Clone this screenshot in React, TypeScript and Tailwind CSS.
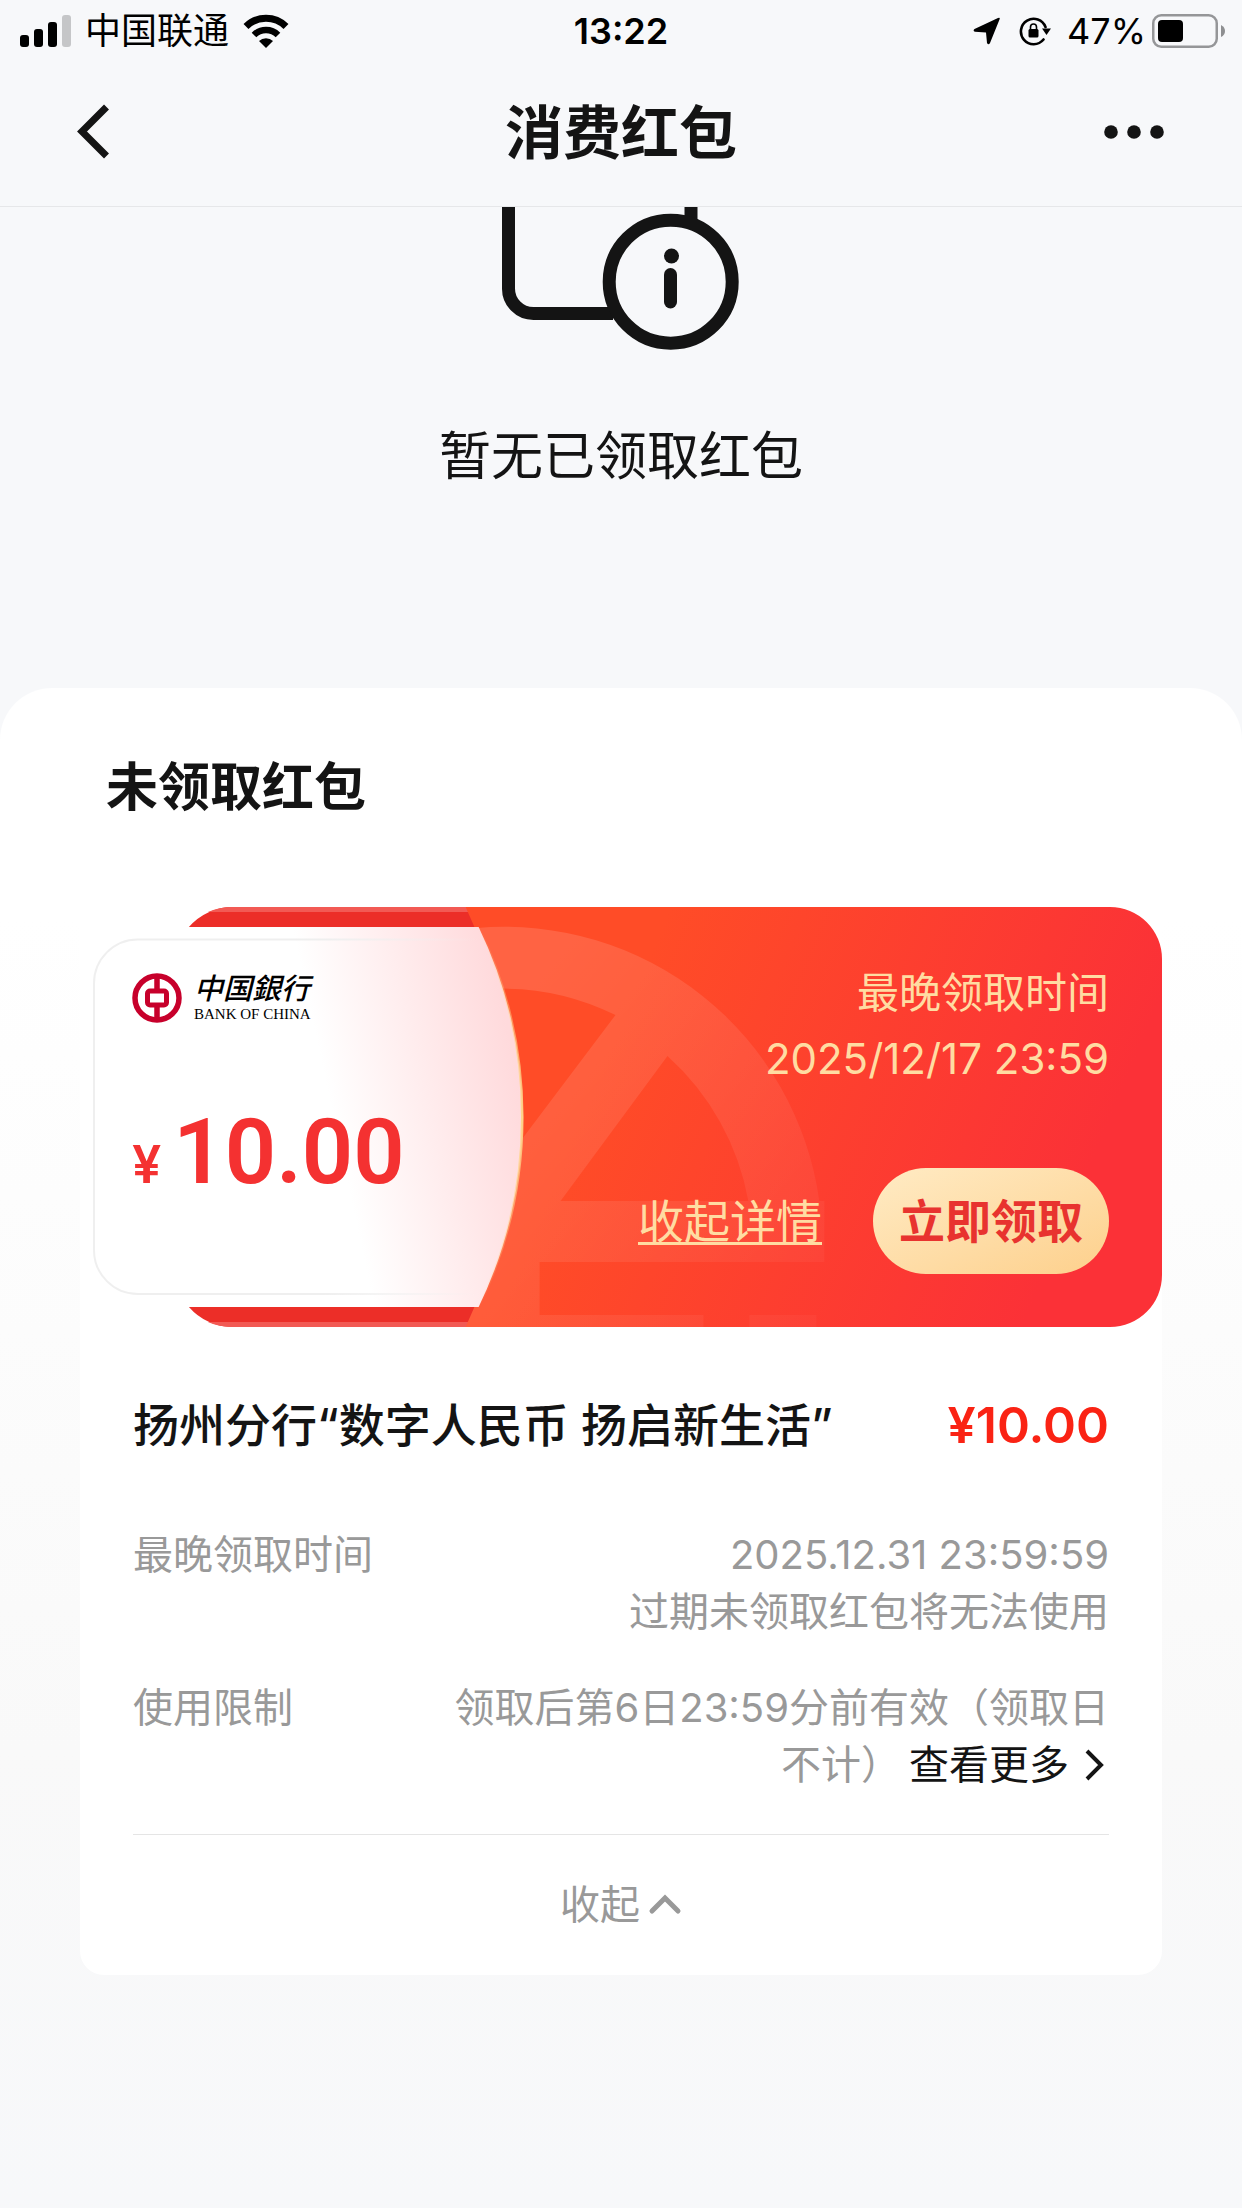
import { useState } from "react";

const coupon = {
    amount: "10.00",
    title: "扬州分行“数字人民币 扬启新生活”",
    deadline: "2025/12/17 23:59",
};

export default function App() {
    return (
        <div className="min-h-screen flex flex-col bg-[#f7f8fa] text-[#141414] font-[Inter,'Noto_Sans_CJK_SC',sans-serif]">
            <StatusBar />
            <NavBar />
            <main className="flex-1 flex flex-col">
                <EmptyState />
                <section className="flex-1 px-20 pt-[70px] pb-20 rounded-t-[52px] bg-linear-to-b from-white from-15% via-[#f9f9f9] via-70% to-[#f7f8fa]">
                    <h2 className="pl-[26px] mb-[89px] text-[52px] leading-[60px] font-bold">未领取红包</h2>
                    <CouponCard />
                </section>
            </main>
        </div>
    );
}

const StatusBar = () => (
    <div className="h-[60px] pt-0.5 px-4 grid grid-cols-3 items-center text-[36px] leading-[44px] text-black">
        <div className="pl-1 flex items-center gap-[14px]">
            <SignalIcon />
            <span className="whitespace-nowrap">中国联通</span>
            <WifiIcon />
        </div>
        <span className="text-center font-semibold">13:22</span>
        <div className="flex items-center justify-end">
            <LocationIcon />
            <RotationLockIcon />
            <span className="ml-4 mr-1.5">47%</span>
            <BatteryIcon />
        </div>
    </div>
);

const NavBar = () => (
    <header className="h-[147px] px-[76px] flex items-center justify-between border-b border-[#e6e7e9]">
        <button type="button" aria-label="返回" className="w-[64px] h-[60px]">
            <svg width="36" height="60" viewBox="0 0 36 60" fill="none" stroke="#141414" strokeWidth="7">
                <path d="M30.500 4L6 28.500L30.500 53" />
            </svg>
        </button>
        <h1 className="text-[58px] leading-[68px] font-bold">消费红包</h1>
        <button type="button" aria-label="更多" className="w-[64px] h-[60px]">
            <svg width="64" height="60" viewBox="0 0 64 60" fill="#141414">
                <circle cx="9" cy="29" r="6.800" />
                <circle cx="32" cy="29" r="6.800" />
                <circle cx="55" cy="29" r="6.800" />
            </svg>
        </button>
    </header>
);

const EmptyState = () => (
    <section className="flex flex-col items-center pb-[201px]">
        <svg width="240" height="143" viewBox="0 0 240 143" fill="none" stroke="#141414" strokeWidth="13">
            <path d="M7.500 -10V81A25 25 0 0 0 32.500 106.500H112M190 -10V16" />
            <circle cx="169.700" cy="74.700" r="61.500" />
            <circle cx="170.500" cy="49" r="7.500" fill="#141414" stroke="none" />
            <path d="M169.500 67.500V95" strokeLinecap="round" />
        </svg>
        <p className="mt-[77px] text-[52px] leading-[60px]">暂无已领取红包</p>
    </section>
);

const CouponCard = () => {
    const [isOpen, setIsOpen] = useState(true);

    return (
        <article className="bg-white rounded-b-3xl">
            <div className="relative h-[420px]">
                <CouponArt />
                <div className="relative h-full flex justify-between">
                    <div className="pl-[52px] pt-[66px]">
                        <BankLogo />
                        <p className="mt-[85px] flex items-baseline gap-3 text-[#f43131]">
                            <span className="text-[52px] leading-none font-semibold">¥</span>
                            <span className="text-[90px] leading-none font-semibold font-[Roboto,sans-serif]">
                                {coupon.amount}
                            </span>
                        </p>
                    </div>
                    <div className="p-[53px] flex flex-col items-end justify-between text-[#ffdca2]">
                        <div className="text-right text-[42px] leading-[66px]">
                            <p>最晚领取时间</p>
                            <p>{coupon.deadline}</p>
                        </div>
                        <div className="flex items-center gap-[51px] text-[46px] leading-[60px]">
                            <button
                                type="button"
                                onClick={() => setIsOpen(!isOpen)}
                                className="underline decoration-3 underline-offset-4 cursor-pointer"
                            >
                                {isOpen ? "收起详情" : "展开详情"}
                            </button>
                            <button
                                type="button"
                                className="w-[236px] h-[106px] rounded-full bg-linear-to-br from-[#ffebc4] to-[#fdd08c] font-bold text-[#e8332f] cursor-pointer"
                            >
                                立即领取
                            </button>
                        </div>
                    </div>
                </div>
            </div>
            {isOpen && <CouponDetails onCollapse={() => setIsOpen(false)} />}
        </article>
    );
};

const CouponDetails = ({ onCollapse }: { onCollapse: () => void }) => (
    <div className="px-[53px] pt-[68px]">
        <div className="flex items-center justify-between leading-[60px]">
            <h3 className="text-[46px] font-medium">{coupon.title}</h3>
            <span className="text-[50px] font-semibold text-[#fa2314]">¥{coupon.amount}</span>
        </div>
        <dl className="mt-[71px] pb-[41px] space-y-[39px] border-b border-[#e5e5e5] text-[40px] leading-[57px] text-[#999]">
            <div className="flex">
                <dt className="w-[300px] shrink-0">最晚领取时间</dt>
                <dd className="flex-1 text-right">
                    2025.12.31 23:59:59
                    <br />
                    过期未领取红包将无法使用
                </dd>
            </div>
            <div className="flex">
                <dt className="w-[300px] shrink-0">使用限制</dt>
                <dd className="flex-1 text-right">
                    领取后第6日23:59分前有效（领取日不计）
                    <a href="#more" className="ml-2 inline-flex items-center gap-4 text-[#141414]">
                        查看更多
                        <svg width="24" height="34" viewBox="0 0 24 34" fill="none" stroke="currentColor" strokeWidth="4">
                            <path d="M2 3L16 17L2 31" />
                        </svg>
                    </a>
                </dd>
            </div>
        </dl>
        <button
            type="button"
            onClick={onCollapse}
            className="w-full h-[140px] flex items-center justify-center gap-2 text-[40px] text-[#999] cursor-pointer"
        >
            收起
            <svg width="34" height="24" viewBox="0 0 34 24" fill="none" stroke="currentColor" strokeWidth="5" strokeLinecap="round">
                <path d="M4 18L17 5L30 18" />
            </svg>
        </button>
    </div>
);

const BankLogo = () => (
    <div className="flex items-center gap-3">
        <svg width="50" height="50" viewBox="0 0 50 50" fill="none" stroke="#c7002b">
            <circle cx="25" cy="25" r="22" strokeWidth="5.500" />
            <rect x="15.500" y="18" width="19" height="14" rx="2.500" strokeWidth="5" />
            <path d="M25 3V17M25 33V47" strokeWidth="5.500" />
        </svg>
        <div className="text-black">
            <p className="text-[29px] leading-8 font-medium italic">中国銀行</p>
            <p className="text-[15px] leading-[18px] font-['Liberation_Serif',serif]">BANK OF CHINA</p>
        </div>
    </div>
);

// Red envelope: dark flap strips, pale ticket with a curved edge, watermark on the right
const CouponArt = () => (
    <svg className="absolute inset-0 w-full h-full" viewBox="0 0 1083 420" preserveAspectRatio="none" fill="none">
        <defs>
            <linearGradient id="body" gradientUnits="userSpaceOnUse" x1="540" y1="120" x2="990" y2="310">
                <stop stopColor="#ff4c27" />
                <stop offset="1" stopColor="#fb3137" />
            </linearGradient>
            <linearGradient id="ticket" gradientUnits="userSpaceOnUse" x1="260" y1="240" x2="445" y2="200">
                <stop stopColor="#fff" />
                <stop offset="1" stopColor="#ffdadc" />
            </linearGradient>
            <linearGradient id="outline" gradientUnits="userSpaceOnUse" x1="14" x2="400" y1="0" y2="0">
                <stop offset="0.600" stopColor="#efefef" />
                <stop offset="1" stopColor="#efefef" stopOpacity="0" />
            </linearGradient>
            <linearGradient id="edge" gradientUnits="userSpaceOnUse" x1="0" x2="0" y1="20" y2="400">
                <stop stopColor="#ffd48a" stopOpacity="0" />
                <stop offset="0.500" stopColor="#ffd48a" />
                <stop offset="1" stopColor="#ffd48a" stopOpacity="0" />
            </linearGradient>
            <linearGradient id="mark" gradientUnits="userSpaceOnUse" x1="430" y1="100" x2="760" y2="380">
                <stop stopColor="#fff" stopOpacity="0.130" />
                <stop offset="1" stopColor="#fff" stopOpacity="0.030" />
            </linearGradient>
        </defs>
        <path d="M109 20A58 58 0 0 1 153 0H400V420H153A58 58 0 0 1 109 400Z" fill="#ec2e28" />
        <path d="M128 5A58 58 0 0 1 153 0H400V5ZM128 415A58 58 0 0 0 153 420H400V415Z" fill="#f25a54" />
        <path d="M386 0H1031A52 52 0 0 1 1083 52V368A52 52 0 0 1 1031 420H386L397 395V25Z" fill="url(#body)" />
        <path
            d="M397 21A318 318 0 0 1 740 294H745V355H460V408H624V420H386L397 395V290L444 230L536 108A256 256 0 0 0 397 83ZM588 149L481 294H669A256 256 0 0 0 588 149ZM670 408H737V420H670Z"
            fill="url(#mark)"
            fillRule="evenodd"
        />
        <path d="M0 20H399A435 435 0 0 1 399 400H0Z" fill="url(#ticket)" />
        <path d="M399 20A435 435 0 0 1 399 400" stroke="url(#edge)" strokeWidth="2.500" />
        <path d="M400 32.500H58A44 44 0 0 0 14 76.500V343A44 44 0 0 0 58 387H400" stroke="url(#outline)" strokeWidth="2" />
    </svg>
);

const SignalIcon = () => (
    <svg width="51" height="32" viewBox="0 0 51 32">
        <rect y="20" width="9" height="12" rx="3" />
        <rect x="14" y="14" width="9" height="18" rx="3" />
        <rect x="28" y="7" width="9" height="25" rx="3" />
        <rect x="42" width="9" height="32" rx="3" fill="#c5c6c8" />
    </svg>
);

const WifiIcon = () => (
    <svg width="46" height="34" viewBox="0 0 46 34" fill="none" stroke="black" strokeWidth="7">
        <path d="M3 12.500A28.500 28.500 0 0 1 43 12.500" />
        <path d="M11 21A17 17 0 0 1 35 21" strokeWidth="6.500" />
        <path d="M16 27A10 10 0 0 1 30 27L23 34Z" fill="black" stroke="none" />
    </svg>
);

const LocationIcon = () => (
    <svg width="28" height="28" viewBox="0 0 28 28">
        <path d="M25 1Q27.500 0 26.500 2.500L17 26Q15.500 28.500 14 26L13 15.500L2 14.800Q-0.500 14 1.500 12Z" />
    </svg>
);

const RotationLockIcon = () => (
    <svg className="ml-[18px]" width="32" height="30" viewBox="0 0 32 30" fill="none" stroke="black">
        <path d="M26.500 11A12.700 12.700 0 1 0 24.500 23.500" strokeWidth="2.600" strokeLinecap="round" />
        <path d="M23 12.500H32L27.500 19Z" fill="black" stroke="none" />
        <rect x="9.500" y="13" width="10" height="8.500" rx="1.500" fill="black" stroke="none" />
        <path d="M11.500 14V11A3 3 0 0 1 17.500 11V14" strokeWidth="1.600" />
    </svg>
);

const BatteryIcon = () => (
    <svg width="74" height="34" viewBox="0 0 74 34">
        <rect x="1.250" y="1.250" width="63.500" height="31.500" rx="8" fill="none" stroke="#959698" strokeWidth="2.500" />
        <rect x="6" y="6" width="25" height="22" rx="4" />
        <path d="M69 11Q73 13 73 17Q73 21 69 23Z" fill="#8e8f91" />
    </svg>
);
